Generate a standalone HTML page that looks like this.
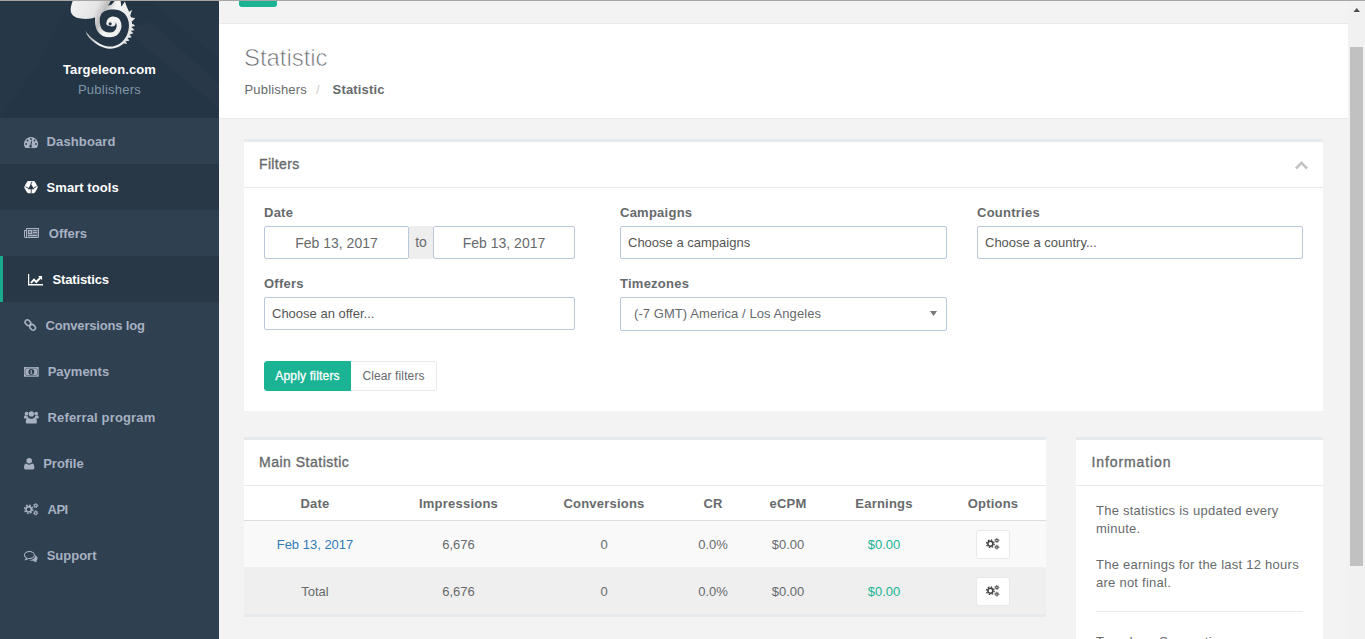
<!DOCTYPE html>
<html lang="en">
<head>
<meta charset="utf-8">
<title>Statistic - Targeleon.com</title>
<style>
*{box-sizing:border-box;margin:0;padding:0}
html,body{width:1365px;height:639px;overflow:hidden}
body{font-family:"Liberation Sans","DejaVu Sans",sans-serif;font-size:13px;color:#676a6c;background:#f3f3f4;position:relative}
a{text-decoration:none;color:inherit}
.abs{position:absolute}
/* top hairline */
#topline{left:0;top:0;width:1365px;height:1px;background:#a8a5a5;z-index:50}
/* sidebar */
#side{left:0;top:0;width:219px;height:639px;background:#2f4050}
#navhead{left:0;top:0;width:219px;height:118px;background:#243545;overflow:hidden}
#brand{left:0;top:61.500px;width:219px;text-align:center;color:#fff;font-weight:700;font-size:13px;line-height:16px;letter-spacing:.12px}
#role{left:0;top:82px;width:219px;text-align:center;color:#8095a8;font-size:13px;line-height:16px;letter-spacing:.25px}
.nav{left:0;width:219px;height:46px;color:#a7b1c2;font-weight:700;font-size:13px;line-height:46px;white-space:nowrap}
.nav.dark{background:#293846;color:#fff}
.nav.active{border-left:3px solid #19aa8d}
.nav svg{position:absolute;fill:currentColor}
.nav span{position:absolute;top:0}

.ic{position:absolute;fill:currentColor;overflow:visible}
.navt{font-weight:700;font-size:13px;line-height:46px;white-space:nowrap;margin-top:1px}
/* content */
#navbar{left:219px;top:1px;width:1129px;height:23px;background:#f3f3f4;border-bottom:1px solid #e7eaec}
#greenbtn{left:239px;top:0;width:38px;height:7px;background:#1ab394;border-radius:0 0 3px 3px}
#heading{left:219px;top:24px;width:1129px;height:95px;background:#fff;border-bottom:1px solid #e7eaec}
#h2{left:244px;top:41px;font-size:24px;line-height:34px;font-weight:400;color:#676a6c;letter-spacing:-.05px;-webkit-text-stroke:.7px #fff}
.ibox{background:#fff;border-top:3px solid #e7eaec}
.ititle{left:15px;font-size:14px;line-height:20px;color:#676a6c;-webkit-text-stroke:.35px #676a6c;white-space:nowrap}
.idiv{left:0;width:100%;height:1px;background:#e7eaec}
label{position:absolute;font-weight:700;font-size:13px;line-height:18px;color:#676a6c;letter-spacing:.25px;white-space:nowrap}
.inp{position:absolute;height:33px;background:#fff;border:1px solid #b9c8d8;border-radius:2px;font-size:13px;line-height:31px;color:#555;padding-left:7px;white-space:nowrap}
.inp.date{font-size:14px;text-align:center;padding:0;color:#676a6c;line-height:33px}

.bc{top:81px;font-size:13px;line-height:18px;white-space:nowrap}
.btn{position:absolute;height:30px;font-size:12px;line-height:28px;text-align:center;white-space:nowrap;border:1px solid #e7eaec;background:#fff;color:#676a6c}
.th,.td{position:absolute;text-align:center;white-space:nowrap;font-size:13px;line-height:18px}
.th{font-weight:700;color:#676a6c;letter-spacing:.22px}
.optbtn{position:absolute;width:34px;height:29px;background:#fff;border:1px solid #e7eaec;border-radius:3px}
.chev{position:absolute;fill:none;stroke:#c4c4c4;stroke-width:2.2}
/* scrollbar */
#sbar{left:1348px;top:0;width:17px;height:639px;background:#f1f1f1}
#thumb{left:1350px;top:47px;width:13px;height:519px;background:#c1c1c1}
</style>
</head>
<body>
<div id="side" class="abs">
  <div id="navhead" class="abs"><svg class="abs" style="left:0;top:0" width="219" height="118" viewBox="0 0 219 118"><path d="M125 30L219 108V84L150 22z" fill="#fff" fill-opacity=".018"/><path d="M0 0H70L40 60L0 118z" fill="#fff" fill-opacity=".012"/><path d="M150 0H219V60z" fill="#fff" fill-opacity=".01"/></svg></div>
  <!--LOGO--><svg class="abs" style="left:0;top:0" width="219" height="60" viewBox="0 0 219 60">
<defs><linearGradient id="lg" x1="70" y1="0" x2="135" y2="30" gradientUnits="userSpaceOnUse"><stop offset="0" stop-color="#f4f4f4"/><stop offset=".38" stop-color="#e4e4e4"/><stop offset=".5" stop-color="#bdbdbd"/><stop offset=".62" stop-color="#f6f6f6"/><stop offset="1" stop-color="#e2e2e2"/></linearGradient></defs>
<path d="M124.42 0.00C124.78 1.02 125.80 4.09 126.61 6.13C127.41 8.18 128.43 10.08 129.24 12.27C130.04 14.46 130.96 16.94 131.43 19.28C131.90 21.62 132.26 23.96 132.04 26.29C131.82 28.63 131.02 31.04 130.11 33.30C129.21 35.57 128.07 37.91 126.61 39.88C125.15 41.85 123.25 43.78 121.35 45.14C119.45 46.49 117.26 47.44 115.21 48.03C113.17 48.61 111.12 48.76 109.08 48.64C107.03 48.52 104.99 48.06 102.94 47.33C100.90 46.60 98.71 45.43 96.81 44.26C94.91 43.09 93.09 41.78 91.55 40.32C90.02 38.85 88.63 37.10 87.61 35.50C86.58 33.89 85.46 31.00 85.42 30.67C85.37 30.35 86.18 32.25 87.34 33.57C88.51 34.88 90.56 37.00 92.43 38.56C94.30 40.13 96.37 41.72 98.56 42.94C100.75 44.17 103.24 45.34 105.57 45.92C107.91 46.51 110.32 46.77 112.59 46.45C114.85 46.13 117.17 45.24 119.16 44.00C121.15 42.75 123.06 40.93 124.50 39.00C125.95 37.07 127.09 34.69 127.84 32.43C128.58 30.16 128.96 27.61 128.97 25.42C128.99 23.23 128.61 21.18 127.92 19.28C127.24 17.38 126.24 15.48 124.86 14.02C123.47 12.56 121.64 11.28 119.60 10.52C117.55 9.76 114.92 9.44 112.59 9.47C110.25 9.49 107.40 10.01 105.57 10.69C103.75 11.38 102.62 12.45 101.63 13.58C100.64 14.72 100.71 16.87 99.61 17.53C98.52 18.19 96.84 17.31 95.06 17.53C93.27 17.75 91.26 18.67 88.92 18.84C86.58 19.02 83.37 18.95 81.03 18.58C78.70 18.22 76.51 17.56 74.90 16.65C73.29 15.75 72.09 14.46 71.39 13.15C70.69 11.83 70.62 10.37 70.69 8.76C70.77 7.16 71.42 4.97 71.83 3.51C72.24 2.04 72.93 0.58 73.15 0.00ZM127.05 13.15 L132.04 9.82 L129.68 17.53ZM130.11 17.09 L135.20 18.23 L131.17 22.35ZM131.17 22.35 L135.20 25.94 L131.43 26.73ZM131.43 26.73 L134.50 30.24 L130.64 30.85ZM130.64 30.85 L133.44 33.30 L129.68 34.62ZM129.68 34.62 L131.69 37.25 L127.92 38.12ZM127.75 38.30 L129.41 40.75 L125.73 41.19ZM125.56 41.37 L127.05 43.65 L123.54 43.56Z" fill="url(#lg)"/>
<path d="M108.03 5.78 L111.27 0.00 L115.39 0.00 L111.71 4.38ZM120.47 0.00 L125.91 0.00 L121.35 6.84Z" fill="#243545"/>
<path d="M97.51 16.21C97.51 17.46 97.19 21.40 97.51 23.66C97.83 25.93 98.39 28.12 99.44 29.80C100.49 31.48 102.07 32.90 103.82 33.74C105.57 34.59 108.06 34.91 109.96 34.88C111.86 34.85 113.78 34.56 115.21 33.57C116.65 32.57 117.93 30.57 118.55 28.92C119.16 27.27 119.19 25.15 118.90 23.66C118.60 22.17 117.84 20.79 116.79 19.98C115.74 19.18 113.78 18.74 112.59 18.84C111.39 18.95 110.25 19.87 109.61 20.60C108.96 21.33 108.88 22.79 108.73 23.23" fill="none" stroke="url(#lg)" stroke-width="4.800" stroke-linecap="round"/>
<circle cx="111.88" cy="22.61" r="3.900" fill="#f0f0f0"/>
<circle cx="110.13" cy="23.84" r="1.600" fill="#243545"/>
</svg><!--/LOGO-->
  <div id="brand" class="abs">Targeleon.com</div>
  <div id="role" class="abs">Publishers</div>
  <div class="nav abs" style="top:118px"></div>
  <svg class="ic" style="left:23.5px;top:137px;color:#a7b1c2" width="14" height="10" viewBox="0 0 14 10" preserveAspectRatio="none"><path d="M7 0a7 7 0 0 0-6 10.6c.1.3.3.4.6.4h10.8c.3 0 .5-.1.6-.4A7 7 0 0 0 7 0z"/><g fill="#2f4050"><circle cx="2.1" cy="7" r=".9"/><circle cx="3.5" cy="3.5" r=".9"/><circle cx="7" cy="2" r=".9"/><circle cx="10.5" cy="3.5" r=".9"/><circle cx="11.9" cy="7" r=".9"/><path d="M6.2 8.1l1.1-4.4.8.2-.7 4.4a1.3 1.300 0 1 1-1.200-.2z"/></g></svg>
  <div class="navt abs" style="left:46.6px;top:118px;color:#a7b1c2;letter-spacing:0.12px">Dashboard</div>
  <div class="nav abs dark" style="top:164px"></div>
  <svg class="ic" style="left:23.700px;top:180.600px;color:#fff" width="14" height="12.400" viewBox="0 0 14 12.400"><path d="M4.600 2h4.800l2.400 4.200-2.400 4.200H4.600L2.200 6.200z" fill="currentColor" stroke="currentColor" stroke-width="3.800" stroke-linejoin="round"/><path d="M7 2.900L10.200 8.200H3.800z" fill="#293846"/><g stroke="#293846" stroke-width=".9" fill="none"><path d="M7.200 8v4.400M6.600 3.800L8 .8M9.500 7.400l3-2.200M4.500 7.400L1.400 5.600"/></g></svg>
  <div class="navt abs" style="left:46.6px;top:164px;color:#fff;letter-spacing:0.05px">Smart tools</div>
  <div class="nav abs" style="top:210px"></div>
  <svg class="ic" style="left:23.8px;top:228px;color:#a7b1c2" width="15" height="10" viewBox="0 0 15 10" preserveAspectRatio="none"><path d="M2 0h13v8.500c0 .8-.7 1.500-1.500 1.500h-12C.7 10 0 9.300 0 8.500V2h2zm1 1v7.500a.5.500 0 0 1-1 0V3H1v5.500c0 .3.200.5.500.5h12c.3 0 .5-.2.500-.5V1zm1 1h4v4H4zm1 1v2h2V3zm4-1h4v1H9zm0 2h4v1H9zm-5 3h9v1H4z"/><rect x="3.500" y="1.500" width="10.500" height="7.500" fill-opacity=".4"/></svg>
  <div class="navt abs" style="left:48.8px;top:210px;color:#a7b1c2">Offers</div>
  <div class="nav abs dark active" style="top:256px"></div>
  <svg class="ic" style="left:28px;top:273.500px;color:#fff" width="15" height="11.500" viewBox="0 0 16 12" preserveAspectRatio="none"><path d="M0 0h1.300v10.500H16V12H0z"/><path d="M2.400 8.600l4-4.200 2.400 2.400 3.300-3.300-1.300-1.300h4.200v4.200l-1.400-1.400-4.800 4.800-2.400-2.400-2.600 2.700z"/></svg>
  <div class="navt abs" style="left:52.5px;top:256px;color:#fff;letter-spacing:-0.15px">Statistics</div>
  <div class="nav abs" style="top:302px"></div>
  <svg class="ic" style="left:23.6px;top:319px;color:#a7b1c2" width="12.5" height="12" viewBox="0 0 12.500 12" preserveAspectRatio="none"><g fill="none" stroke="currentColor" stroke-width="1.700"><rect x="-3.100" y="-2.300" width="6.200" height="4.600" rx="2.300" transform="translate(3.900 3.700) rotate(45)"/><rect x="-3.100" y="-2.300" width="6.200" height="4.600" rx="2.300" transform="translate(8.600 8.300) rotate(45)"/></g></svg>
  <div class="navt abs" style="left:45.5px;top:302px;color:#a7b1c2;letter-spacing:-0.17px">Conversions log</div>
  <div class="nav abs" style="top:348px"></div>
  <svg class="ic" style="left:23.600px;top:366.600px;color:#a7b1c2" width="14.700" height="9.800" viewBox="0 0 15 10"><path d="M0 0h15v10H0z"/><path d="M1.200 2.600A1.600 1.600 0 0 0 2.600 1.200H12.400A1.600 1.600 0 0 0 13.800 2.600V7.400A1.600 1.600 0 0 0 12.400 8.800H2.600A1.600 1.600 0 0 0 1.200 7.400z" fill="none" stroke="#2f4050" stroke-width=".5"/><ellipse cx="7.500" cy="5" rx="3" ry="2.900" fill="#2f4050"/><path d="M7 3.400h1v3.200H7zM6.400 3.900h.8v.6h-.8zM6.400 6.200h2.200v.6H6.400z"/></svg>
  <div class="navt abs" style="left:47.7px;top:348px;color:#a7b1c2">Payments</div>
  <div class="nav abs" style="top:394px"></div>
  <svg class="ic" style="left:23.6px;top:411px;color:#a7b1c2" width="14.7" height="12.6" viewBox="0 0 15 13" preserveAspectRatio="none"><circle cx="7.500" cy="3" r="2.700"/><path d="M3.300 13c-.9 0-1.500-.6-1.500-1.400 0-2.700.8-4.800 2.600-4.800.4.500 1.600 1.300 3.100 1.300s2.700-.8 3.100-1.300c1.800 0 2.600 2.100 2.600 4.800 0 .8-.6 1.400-1.500 1.400z"/><circle cx="2.600" cy="2.700" r="1.900"/><circle cx="12.400" cy="2.700" r="1.900"/><path d="M1.200 7.700C.4 7.700 0 7.300 0 6.700c0-1.200.3-2.300 1.300-2.300.3.300.8.600 1.400.6.300 0 .600-.1.900-.2 0 .8.200 1.500.7 2.100-.7.100-1.300.4-1.700.8zM13.800 7.700c.8 0 1.200-.4 1.200-1 0-1.200-.3-2.300-1.300-2.300-.3.300-.8.600-1.400.600-.3 0-.6-.1-.9-.2 0 .8-.2 1.500-.7 2.100.7.100 1.300.4 1.700.8z"/></svg>
  <div class="navt abs" style="left:47.5px;top:394px;color:#a7b1c2;letter-spacing:0.15px">Referral program</div>
  <div class="nav abs" style="top:440px"></div>
  <svg class="ic" style="left:23.6px;top:458px;color:#a7b1c2" width="10.4" height="11.4" viewBox="0 0 10.400 11.400" preserveAspectRatio="none"><circle cx="5.200" cy="2.800" r="2.800"/><path d="M1.600 11.400C.6 11.400 0 10.800 0 10c0-2.500.6-4.400 2.300-4.400.6.600 1.600 1.100 2.900 1.100s2.300-.5 2.900-1.100c1.700 0 2.300 1.900 2.300 4.400 0 .8-.6 1.400-1.600 1.400z"/></svg>
  <div class="navt abs" style="left:43.2px;top:440px;color:#a7b1c2">Profile</div>
  <div class="nav abs" style="top:486px"></div>
  <svg class="ic" style="left:23.6px;top:503px;color:#a7b1c2" width="14.4" height="12.5" viewBox="0 0 14.400 12.500" preserveAspectRatio="none"><g fill="none" stroke="currentColor"><circle cx="4.700" cy="6.300" r="2.700" stroke-width="1.700"/><circle cx="4.700" cy="6.300" r="4.100" stroke-width="1.500" stroke-dasharray="1.610 1.610"/><circle cx="11.700" cy="2.600" r="1.300" stroke-width="1.100"/><circle cx="11.700" cy="2.600" r="2.100" stroke-width="1" stroke-dasharray=".9 .75"/><circle cx="11.700" cy="9.900" r="1.300" stroke-width="1.100"/><circle cx="11.700" cy="9.900" r="2.100" stroke-width="1" stroke-dasharray=".9 .75"/></g></svg>
  <div class="navt abs" style="left:47.5px;top:486px;color:#a7b1c2;letter-spacing:-0.5px">API</div>
  <div class="nav abs" style="top:532px"></div>
  <svg class="ic" style="left:23.6px;top:550.7px;color:#a7b1c2" width="13.8" height="11" viewBox="0 0 14 11" preserveAspectRatio="none"><path d="M5.500 1C3 1 1 2.300 1 4c0 .9.600 1.700 1.600 2.300l.5.300-.2.600c-.1.300-.3.500-.4.800.6-.2 1.100-.5 1.600-.9l.300-.2.400.1c.2 0 .5 0 .7 0C8 7 10 5.700 10 4S8 1 5.500 1zm0-1C8.500 0 11 1.800 11 4S8.500 8 5.500 8c-.3 0-.6 0-.9-.1C3.800 8.500 2.800 9 1.800 9.200c-.2 0-.5.100-.8.100-.2 0-.3-.1-.3-.3 0-.2.100-.3.200-.4.400-.4.700-.7 1-1.500C.7 6.400 0 5.300 0 4 0 1.800 2.500 0 5.500 0z"/><path d="M11.900 8.900c.3.800.6 1.100 1 1.500.1.100.2.200.2.400 0 .2-.1.300-.3.300-.3 0-.6-.1-.8-.1-1-.2-2-.7-2.800-1.300-.3.100-.6.100-.9.100-1.200 0-2.300-.3-3.200-.8.200 0 .4 0 .6 0 1.300 0 2.600-.4 3.700-1 1.100-.8 1.800-1.800 1.800-3 0-.3-.1-.7-.2-1 1.600.7 2.700 1.900 2.700 3.300 0 1.300-.7 2.300-1.800 3z"/></svg>
  <div class="navt abs" style="left:46.7px;top:532px;color:#a7b1c2">Support</div>
</div>
<div id="navbar" class="abs"></div>
<div id="greenbtn" class="abs"></div>
<div id="heading" class="abs"></div>
<div id="h2" class="abs">Statistic</div>

<div class="bc abs" style="left:244.500px;letter-spacing:.17px">Publishers</div>
<div class="bc abs" style="left:316px;color:#ccc">/</div>
<div class="bc abs" style="left:332.600px;font-weight:700;letter-spacing:.17px">Statistic</div>

<!-- Filters ibox -->
<div id="fbox" class="ibox abs" style="left:244px;top:139px;width:1079px;height:272px">
  <div class="ititle abs" style="top:11.500px;letter-spacing:.35px">Filters</div>
  <svg class="abs" style="left:1051px;top:19px" width="13" height="9" viewBox="0 0 13 9"><path d="M6.500 0L13 6.500 11.100 8.400 6.500 3.800 1.900 8.400 0 6.500z" fill="#c4c4c4"/></svg>
  <div class="idiv abs" style="top:45px"></div>
</div>
<label style="left:264px;top:204px">Date</label>
<div class="inp date" style="left:264px;top:226px;width:145px">Feb 13, 2017</div>
<div class="abs" style="left:409px;top:226px;width:24px;height:33px;background:#eee;font-size:14px;line-height:33px;text-align:center;color:#676a6c">to</div>
<div class="inp date" style="left:433px;top:226px;width:142px">Feb 13, 2017</div>
<label style="left:620px;top:204px">Campaigns</label>
<div class="inp" style="left:620px;top:226px;width:327px">Choose a campaigns</div>
<label style="left:977px;top:204px">Countries</label>
<div class="inp" style="left:977px;top:226px;width:326px">Choose a country...</div>
<label style="left:264px;top:275px">Offers</label>
<div class="inp" style="left:264px;top:297px;width:311px">Choose an offer...</div>
<label style="left:620px;top:275px">Timezones</label>
<div class="inp" style="left:620px;top:297px;width:327px;height:34px;font-size:13px;color:#676a6c;padding-left:13px;line-height:32px;letter-spacing:.07px">(-7 GMT) America / Los Angeles</div>
<svg class="abs" style="left:930px;top:311px" width="7" height="5" viewBox="0 0 7 5"><path d="M0 0h7L3.500 5z" fill="#777"/></svg>
<div class="btn" style="left:264px;top:361px;width:87px;background:#1ab394;border-color:#1ab394;color:#fff;border-radius:3px 0 0 3px;letter-spacing:.2px;-webkit-text-stroke:.3px #fff">Apply filters</div>
<div class="btn" style="left:351px;top:361px;width:86px;border-radius:0 3px 3px 0;border-left:0;letter-spacing:.12px">Clear filters</div>

<!-- Main Statistic ibox -->
<div id="mbox" class="ibox abs" style="left:244px;top:437px;width:802px;height:180px;background:#e7eaec">
  <div class="abs" style="left:0;top:0;width:100%;height:45px;background:#fff"></div>
  <div class="ititle abs" style="top:11.500px;letter-spacing:.5px">Main Statistic</div>
  <div class="idiv abs" style="top:45px"></div>
  <div class="abs" style="left:0;top:46px;width:100%;height:35px;background:#fff;border-bottom:1px solid #ddd"></div>
  <div class="abs" style="left:0;top:81px;width:100%;height:46px;background:#f9f9f9"></div>
  <div class="abs" style="left:0;top:127px;width:100%;height:47px;background:#efefef"></div>
</div>
<div class="th" style="left:244px;width:142px;top:495px">Date</div>
<div class="th" style="left:386px;width:145px;top:495px">Impressions</div>
<div class="th" style="left:531px;width:146px;top:495px">Conversions</div>
<div class="th" style="left:677px;width:72px;top:495px">CR</div>
<div class="th" style="left:749px;width:78px;top:495px">eCPM</div>
<div class="th" style="left:827px;width:114px;top:495px">Earnings</div>
<div class="th" style="left:941px;width:104px;top:495px">Options</div>

<div class="td" style="left:244px;width:142px;top:536px;color:#337ab7">Feb 13, 2017</div>
<div class="td" style="left:386px;width:145px;top:536px">6,676</div>
<div class="td" style="left:531px;width:146px;top:536px">0</div>
<div class="td" style="left:677px;width:72px;top:536px">0.0%</div>
<div class="td" style="left:749px;width:78px;top:536px">$0.00</div>
<div class="td" style="left:827px;width:114px;top:536px;color:#1ab394">$0.00</div>
<div class="optbtn" style="left:975.500px;top:529.500px"></div>
<svg class="ic" style="left:986px;top:538.2px;color:#444" width="13.4" height="11.5" viewBox="0 0 14.400 12.500" preserveAspectRatio="none"><g fill="none" stroke="currentColor"><circle cx="4.700" cy="6.300" r="2.700" stroke-width="1.700"/><circle cx="4.700" cy="6.300" r="4.100" stroke-width="1.500" stroke-dasharray="1.610 1.610"/><circle cx="11.700" cy="2.600" r="1.300" stroke-width="1.100"/><circle cx="11.700" cy="2.600" r="2.100" stroke-width="1" stroke-dasharray=".9 .75"/><circle cx="11.700" cy="9.900" r="1.300" stroke-width="1.100"/><circle cx="11.700" cy="9.900" r="2.100" stroke-width="1" stroke-dasharray=".9 .75"/></g></svg>
<div class="td" style="left:244px;width:142px;top:583px">Total</div>
<div class="td" style="left:386px;width:145px;top:583px">6,676</div>
<div class="td" style="left:531px;width:146px;top:583px">0</div>
<div class="td" style="left:677px;width:72px;top:583px">0.0%</div>
<div class="td" style="left:749px;width:78px;top:583px">$0.00</div>
<div class="td" style="left:827px;width:114px;top:583px;color:#1ab394">$0.00</div>
<div class="optbtn" style="left:975.500px;top:576.500px"></div>
<svg class="ic" style="left:986px;top:585.2px;color:#444" width="13.4" height="11.5" viewBox="0 0 14.400 12.500" preserveAspectRatio="none"><g fill="none" stroke="currentColor"><circle cx="4.700" cy="6.300" r="2.700" stroke-width="1.700"/><circle cx="4.700" cy="6.300" r="4.100" stroke-width="1.500" stroke-dasharray="1.610 1.610"/><circle cx="11.700" cy="2.600" r="1.300" stroke-width="1.100"/><circle cx="11.700" cy="2.600" r="2.100" stroke-width="1" stroke-dasharray=".9 .75"/><circle cx="11.700" cy="9.900" r="1.300" stroke-width="1.100"/><circle cx="11.700" cy="9.900" r="2.100" stroke-width="1" stroke-dasharray=".9 .75"/></g></svg>

<!-- Information ibox -->
<div id="ibox" class="ibox abs" style="left:1076px;top:437px;width:247px;height:210px">
  <div class="ititle abs" style="left:15.500px;top:11.500px;letter-spacing:.9px">Information</div>
  <div class="idiv abs" style="top:45px"></div>
  <div class="abs" style="left:20px;top:62px;width:225px;font-size:13px;line-height:18px;letter-spacing:.25px">The statistics is updated every<br>minute.<br><br>The earnings for the last 12 hours<br>are not final.</div>
  <div class="abs" style="left:20px;top:171px;width:207px;height:1px;background:#eaeaea"></div>
  <div class="abs" style="left:20px;top:193px;font-size:13px;line-height:18px;letter-spacing:.25px;white-space:nowrap">Targeleon Suggestions</div>
</div>

<div id="sbar" class="abs"></div>
<div id="thumb" class="abs"></div>
<svg class="abs" style="left:1352.800px;top:7.700px" width="7.500" height="4.500" viewBox="0 0 7.500 4.500"><path d="M0 4.500L3.750 0 7.500 4.500z" fill="#505050"/></svg>
<div id="topline" class="abs"></div>
</body>
</html>
